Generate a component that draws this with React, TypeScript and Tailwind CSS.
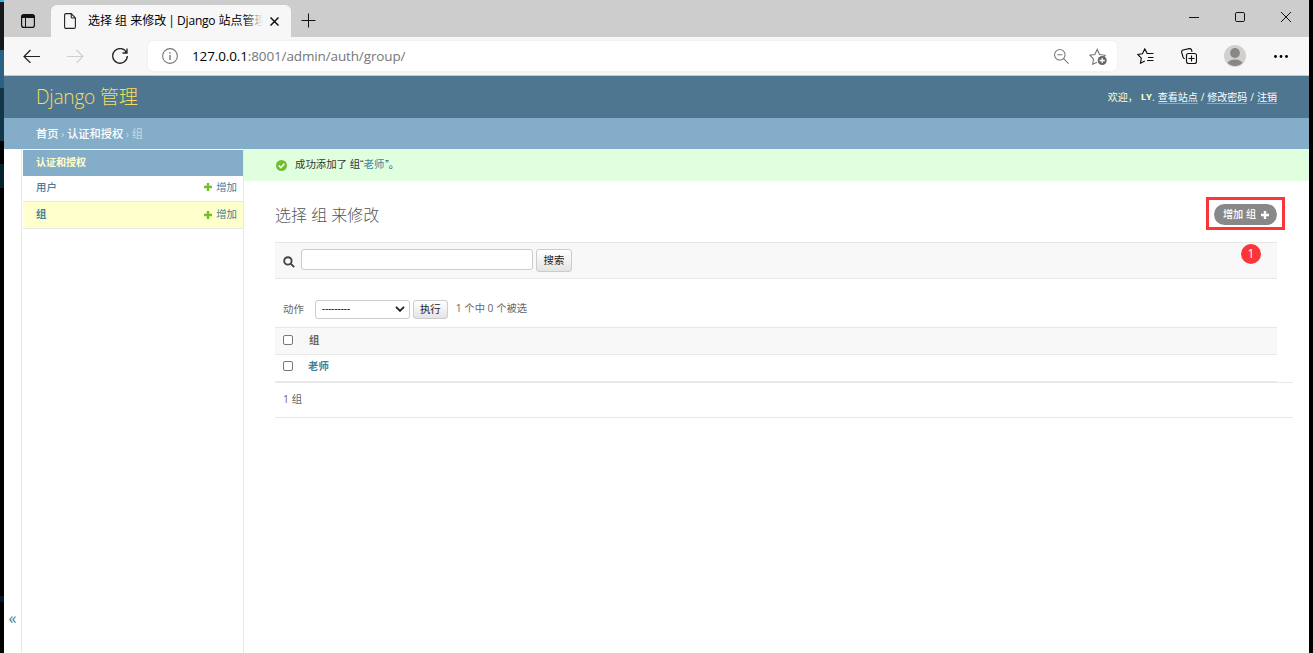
import type { ReactNode } from 'react'

const groups = ['老师']

const models = [
  { name: '用户', active: false },
  { name: '组', active: true },
]

function PlusIcon({ className }: { className: string }) {
  return (
    <svg viewBox="0 0 8 8" className={className} fill="currentColor">
      <path d="M2.8 0h2.4v2.8H8v2.4H5.2V8H2.8V5.2H0V2.8h2.8z" />
    </svg>
  )
}

function TabBar() {
  return (
    <div className="flex h-[37px] bg-[#cdcdcd]">
      <svg viewBox="0 0 14 14" className="mt-[14px] ml-[17px] size-[14px] shrink-0" fill="none" stroke="#111">
        <rect x="0.6" y="0.6" width="12.8" height="12.8" rx="2.2" strokeWidth="1.2" />
        <path d="M1 2.5h12" strokeWidth="3" />
        <path d="M4.5 4v9.4" strokeWidth="1" />
      </svg>
      <div className="mt-[5px] ml-[16px] flex h-8 w-[240px] shrink-0 items-center rounded-t-md bg-[#f7f7f7] pl-[13px]">
        <svg viewBox="0 0 12 16" className="h-4 w-3 shrink-0" fill="none" stroke="#222" strokeWidth="1.1">
          <path d="M2 .6h5.2l4.2 4.3V14a1.4 1.4 0 0 1-1.400 1.400H2A1.400 1.400 0 0 1 .6 14V2A1.400 1.400 0 0 1 2 .6zM7.200.6V4a1 1 0 0 0 1 1h3.200" />
        </svg>
        <div className="relative ml-3 w-[175px] overflow-hidden text-[12px] leading-5 whitespace-nowrap text-black">
          选择 组 来修改 <span className="ml-[-1px]">|</span> <span className="ml-[-1px] tracking-[-0.2px]">Django</span> 站点管理
          <div className="absolute inset-y-0 right-0 w-5 bg-linear-to-r from-transparent to-[#f7f7f7]" />
        </div>
        <svg viewBox="0 0 9 9" className="ml-[7px] size-[9px] shrink-0" stroke="#111" strokeWidth="1.5">
          <path d="M.5.5l8 8M8.5.5l-8 8" />
        </svg>
      </div>
      <svg viewBox="0 0 15 15" className="mt-[13px] ml-[10px] size-[15px] shrink-0" stroke="#111">
        <path d="M7.5 .5v14M.5 7.500h14" />
      </svg>
      <div className="mt-[12px] mr-[18px] ml-auto flex gap-[36px]">
        <svg viewBox="0 0 10 10" className="size-[10px]" stroke="#111">
          <path d="M0 5.5h10" />
        </svg>
        <svg viewBox="0 0 10 10" className="size-[10px]" fill="none" stroke="#111">
          <rect x=".5" y=".5" width="9" height="9" rx="1.3" />
        </svg>
        <svg viewBox="0 0 10 10" className="size-[10px]" stroke="#111">
          <path d="M0 0l10 10M10 0L0 10" />
        </svg>
      </div>
    </div>
  )
}

function Toolbar() {
  return (
    <div className="flex h-[39px] items-center border-b border-[#c9c9c5] bg-[#f7f7f7]">
      <svg viewBox="0 0 17 14" className="mb-px ml-[19px] h-[14px] w-[17px]" fill="none" stroke="#222" strokeWidth="1.2">
        <path d="M17 7.500H1M7.500 1L1 7.500 7.500 14" />
      </svg>
      <svg viewBox="0 0 17 14" className="mb-px ml-[27px] h-[14px] w-[17px]" fill="none" stroke="#cfcfcf" strokeWidth="1.1">
        <path d="M0 7.500h16M9.500 1l6.500 6.500L9.500 14" />
      </svg>
      <svg viewBox="0 0 16 16" className="ml-[28px] size-4" fill="none" stroke="#222" strokeWidth="1.3">
        <path d="M14.7 5A7.3 7.3 0 1 0 15.300 8M15 .5V5h-4.500" />
      </svg>
      <div className="ml-[20px] flex h-[30px] w-[969px] items-center rounded-[5px] bg-white pl-[14px] shadow-[0_0_2px_rgba(0,0,0,0.08)]">
        <svg viewBox="0 0 16 16" className="size-4" fill="none" stroke="#777" strokeWidth="1.1">
          <circle cx="8" cy="8" r="7.4" />
          <path d="M8 7v5M8 4.200v1.500" strokeWidth="1.4" />
        </svg>
        <span className="ml-[14px] text-[13.5px] tracking-[-0.13px] text-[#777]">
          <span className="text-black">127.0.0.1</span>:8001/admin/auth/group/
        </span>
        <svg viewBox="0 0 16 16" className="ml-auto size-[15px]" fill="none" stroke="#777" strokeWidth="1.1">
          <circle cx="6.200" cy="6.200" r="5.600" />
          <path d="M3.500 6.200h5.400M10.300 10.300l5.200 5.200" />
        </svg>
        <svg viewBox="0 0 18 17" className="mr-[10px] ml-[20px] h-[17px] w-[18px]" fill="none" stroke="#777" strokeWidth="1.1">
          <path d="M8 14.200l-4.300 2 .8-5L1 7.200l4.800-.7L8.200 1.400l2.300 5.100 5.600.8-1.200 1.500" />
          <circle cx="13.200" cy="12.500" r="4.500" fill="#666" stroke="none" />
          <path d="M13.200 9.900v5.200M10.600 12.500h5.200" stroke="#fff" strokeWidth="1.3" />
        </svg>
      </div>
      <svg viewBox="0 0 17 16" className="ml-[20px] h-4 w-[17px]" fill="none" stroke="#111" strokeWidth="1.15">
        <path d="M7.800 13l-4.300 2.200.8-5.100L.8 6.500l4.600-.7L7.800.9l2.300 4.400M9.500 5.500h7M11 9.500h5.500M10 12.500h6.500" />
      </svg>
      <svg viewBox="0 0 16 16" className="ml-[27px] size-4" fill="none" stroke="#111" strokeWidth="1.15">
        <path d="M3.700 10.800A3 3 0 0 1 2 9L.7 4.300A2 2 0 0 1 2 2L8.300.6a2 2 0 0 1 2.200 1.200l.5 2" />
        <rect x="5.500" y="5.500" width="10" height="10" rx="2" />
        <path d="M10.500 7.500v6M7.500 10.500h6" />
      </svg>
      <svg viewBox="0 0 22 22" className="ml-[27px] size-[22px]">
        <circle cx="11" cy="11" r="11" fill="#d2d0ce" />
        <circle cx="11" cy="8" r="4.900" fill="#898785" />
        <path d="M3.500 17.800C6.500 13.300 15.500 13.300 18.500 17.800A10.500 10.500 0 0 1 3.500 17.800z" fill="#898785" />
      </svg>
      <svg viewBox="0 0 14 3" className="ml-[28px] h-[3px] w-[14px]" fill="#000">
        <circle cx="1.500" cy="1.500" r="1.400" />
        <circle cx="7" cy="1.500" r="1.400" />
        <circle cx="12.500" cy="1.500" r="1.400" />
      </svg>
    </div>
  )
}

function ToolLink({ children }: { children: ReactNode }) {
  return <a className="inline-block h-[13px] border-b border-[#8fa9ba] leading-[13px] text-white">{children}</a>
}

function Sidebar() {
  return (
    <div className="w-[223px] shrink-0 border-x border-[#e8e8e8] pt-px pl-px">
      <div className="h-[26px] bg-[#83adc9] pl-[13px] text-[10px] leading-[25px] font-bold text-[#ffffcc]">认证和授权</div>
      {models.map(model => (
        <div
          key={model.name}
          className={`flex items-center border-b border-[#e8e8e8] pr-1.5 pl-[13px] text-[#447e9b] ${model.active ? 'h-[27px] bg-[#ffffcc] font-bold' : 'h-[26px] pb-[2px] font-medium'}`}
        >
          <span className="text-[10.4px]">{model.name}</span>
          <PlusIcon className="mr-[4px] mb-px ml-auto size-2 text-[#70bf2b]" />
          <span className="text-[10.4px] font-normal">增加</span>
        </div>
      ))}
    </div>
  )
}

const button = 'rounded-[3px] border border-[#ccc] bg-linear-to-b from-white to-[#e4e4e4] text-center text-[10.4px] text-[#222]'

function Main() {
  return (
    <div className="min-w-0 flex-1">
      <div className="flex h-8 items-center bg-[#dfffdf] pl-8 text-[10.4px] text-[#333]">
        <svg viewBox="0 0 11 11" className="mr-[8px] size-[11px]" fill="none">
          <circle cx="5.500" cy="5.500" r="5.500" fill="#70bf2b" />
          <path d="M2.700 5.500l2.100 2.200 3.600-3.900" stroke="#fff" strokeWidth="1.6" />
        </svg>
        <span>
          成功添加了 组<span className="font-['Liberation_Sans']">“</span>
          <a className="text-[#447e9b]">老师</a>
          <span className="ml-px font-['Liberation_Sans']">”</span>。
        </span>
      </div>

      <div className="flex h-[61px] items-start pl-[31px]">
        <h1 className="mt-[22px] text-[16px] leading-6 font-light text-[#555]">选择 组 来修改</h1>
        <div className="mt-[16px] mr-[24px] ml-auto h-[33px] w-[79px] border-3 border-[#fb3638] p-[4px] pl-[5px]">
          <a className="flex h-[21px] w-[63px] items-center justify-center rounded-full bg-[#888] pl-px text-[10.2px] font-medium text-white">
            <span className="whitespace-nowrap">增加 组</span>
            <PlusIcon className="ml-[5px] size-2" />
          </a>
        </div>
      </div>

      <div className="mr-8 ml-[31px] flex h-[37px] items-start border-y border-[#e8e8e8] bg-[#f8f8f8] pt-1.5 pl-[8px]">
        <svg viewBox="0 0 12 12" className="mt-[7px] size-[12px]" fill="none" stroke="#444" strokeWidth="1.9">
          <circle cx="4.900" cy="4.900" r="3.700" />
          <path d="M7.700 7.700l3.500 3.500" />
        </svg>
        <input className="ml-1.5 h-[21px] w-[232px] rounded-[3px] border border-[#ccc] bg-white outline-none" />
        <button className={`${button} ml-[3px] h-[23px] w-9 pt-px`}>搜索</button>
        <span className="mt-[-5px] mr-4 ml-auto flex size-5 items-center justify-center rounded-full bg-[#fb3638] text-[12px] text-white">
          1
        </span>
      </div>

      <div className="ml-[31px] flex h-12 items-center pt-[13px] pb-px pl-[8px] text-[10.4px] text-[#666]">
        <span className="pt-px">动作</span>
        <div className="ml-[11px] flex h-[19px] w-[95px] items-center justify-between rounded-[3px] border border-[#ccc] bg-white pr-[4px] pl-1.5 text-[#222]">
          <span className="font-['Liberation_Sans'] text-[10.4px] tracking-[-0.35px]">---------</span>
          <svg viewBox="0 0 10 6" className="h-1.5 w-[10px]" fill="none" stroke="#222" strokeWidth="1.9">
            <path d="M1 .8l4 4 4-4" />
          </svg>
        </div>
        <button className={`${button} ml-[3px] h-[19px] w-[35px] leading-[15px]`}>执行</button>
        <span className="ml-[8px] text-[10.3px]">1 个中 0 个被选</span>
      </div>

      <div className="mr-8 ml-[31px] text-[10.4px]">
        <div className="flex h-7 items-center border-y border-[#e8e8e8] bg-[#f8f8f8] pl-[8px] font-bold text-[#666]">
          <span className="mb-[2px] size-[10px] rounded-[2px] border border-[#777] bg-white" />
          <span className="ml-[16px]">组</span>
        </div>
        {groups.map(group => (
          <div key={group} className="flex h-[27px] items-center border-b border-[#e8e8e8] pb-[2px] pl-[8px] font-bold text-[#447e9b]">
            <span className="mb-[2px] size-[10px] rounded-[2px] border border-[#777] bg-white" />
            <a className="ml-[15px]">{group}</a>
          </div>
        ))}
      </div>
      <div className="mr-4 ml-[31px] flex h-9 items-center border-y border-[#e8e8e8] pl-[8px] text-[10.4px] text-[#666]">1 组</div>
    </div>
  )
}

export default function App() {
  return (
    <div className="flex h-[653px] w-[1313px] overflow-hidden bg-black font-['Open_Sans','Noto_Sans_CJK_SC',sans-serif]">
      {/* sliver of the window behind */}
      <div className="w-1 shrink-0">
        <div className="h-0.5 bg-[#2fb4ee]" />
        <div className="h-12 bg-[#15191c]" />
        <div className="h-[38px] bg-[#2b6283]" />
        <div className="h-[53px] bg-[#103648]" />
        <div className="mt-[23px] h-6 bg-[#04222b]" />
        <div className="mt-[408px] h-1.5 bg-[#07152c]" />
      </div>
      <div className="flex w-[1305px] shrink-0 flex-col bg-white">
        <TabBar />
        <Toolbar />
        <header className="flex h-[42px] items-center bg-[#4f7690] pr-8 pl-8">
          <h1 className="pt-px text-[19.2px] font-light tracking-[-0.25px] text-[#f5dd5d]">Django 管理</h1>
          <div className="ml-auto flex items-center text-[10px] text-[#ffffcc]">
            <span>欢迎，</span>
            <strong className="ml-[3px] text-[9.5px]">LY</strong>
            <span className="mr-[3px]">.</span>
            <ToolLink>查看站点</ToolLink>
            <span className="mx-[3px]">/</span>
            <ToolLink>修改密码</ToolLink>
            <span className="mx-[3px]">/</span>
            <ToolLink>注销</ToolLink>
          </div>
        </header>
        <nav className="flex h-[31px] items-center gap-[2.7px] bg-[#83adc9] pt-px pl-8 text-[11.2px] text-[#c4dce8]">
          <a className="font-medium text-white">首页</a>
          <span>›</span>
          <a className="font-medium text-white">认证和授权</a>
          <span>›</span>
          <span>组</span>
        </nav>
        <div className="flex flex-1">
          <div className="flex w-[17px] shrink-0 items-end justify-center pb-[23px] text-[16px] leading-6 text-[#447e9b]">«</div>
          <Sidebar />
          <Main />
        </div>
      </div>
    </div>
  )
}
